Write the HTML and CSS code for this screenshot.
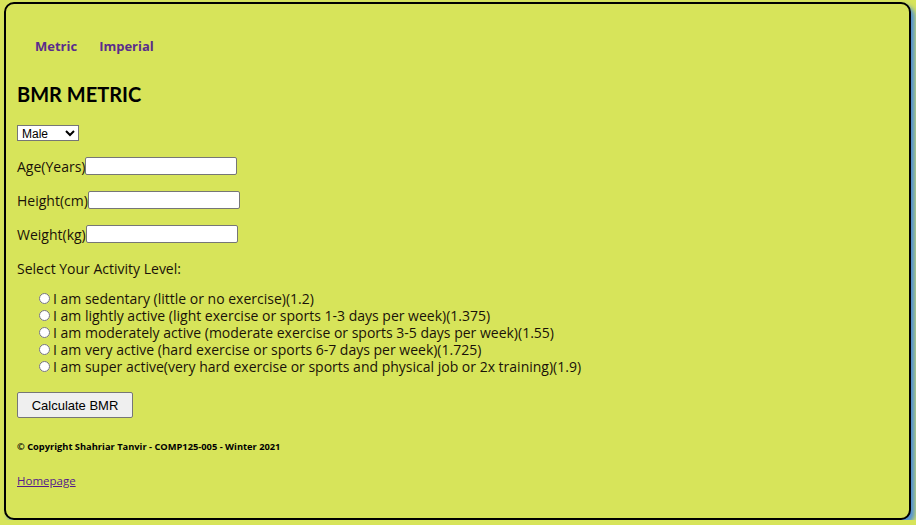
FILE: index.html
```html
<!DOCTYPE html>
<html lang="en">
<head>
<meta charset="utf-8">
<title>BMR Metric</title>
<link rel="stylesheet" href="styles.css">
</head>
<body>
<div class="card">
  <nav class="nav">
    <a href="#">Metric</a>
    <a href="#">Imperial</a>
  </nav>
  <h2 class="title">BMR METRIC</h2>
  <form class="form">
    <select class="sel">
      <option>Male</option>
      <option>Female</option>
    </select>
    <p class="row"><label>Age(Years)</label><input type="text" class="inp"></p>
    <p class="row"><label>Height(cm)</label><input type="text" class="inp"></p>
    <p class="row"><label>Weight(kg)</label><input type="text" class="inp"></p>
    <p class="row">Select Your Activity Level:</p>
    <ul class="levels">
      <li><input type="radio" name="a">I am sedentary (little or no exercise)(1.2)</li>
      <li><input type="radio" name="a">I am lightly active (light exercise or sports 1-3 days per week)(1.375)</li>
      <li><input type="radio" name="a">I am moderately active (moderate exercise or sports 3-5 days per week)(1.55)</li>
      <li><input type="radio" name="a">I am very active (hard exercise or sports 6-7 days per week)(1.725)</li>
      <li><input type="radio" name="a">I am super active(very hard exercise or sports and physical job or 2x training)(1.9)</li>
    </ul>
    <button type="button" class="btn">Calculate BMR</button>
  </form>
  <p class="copy">© Copyright Shahriar Tanvir - COMP125-005 - Winter 2021</p>
  <a class="home" href="#">Homepage</a>
</div>
</body>
</html>
```
FILE: styles.css
```css
html, body {
  margin: 0;
  background: #d7e45a;
}
body {
  padding: 2px 0 0 4px;
  font-family: "Open Sans", "DejaVu Sans", sans-serif;
  color: #1a1208;
}
.card {
  width: 907px;
  height: 518px;
  box-sizing: border-box;
  border: 2px solid #000;
  border-radius: 10px;
  background: #d7e45a;
  box-shadow: 4px 4px 5px #4f8fd8;
  padding: 0 0 0 11px;
}
.nav {
  display: flex;
  gap: 22px;
  padding: 33px 0 0 18px;
}
.nav a {
  font-size: 13px;
  font-weight: bold;
  color: #5a2d8c;
  text-decoration: none;
}
.title {
  margin: 26px 0 0;
  font-family: Lato, "Open Sans", sans-serif;
  font-size: 20px;
  line-height: 26px;
  font-weight: bold;
  color: #000;
}
.form {
  margin-top: 18px;
}
.sel {
  font-family: "Liberation Sans", Arial, sans-serif;
  font-size: 12px;
  width: 62px;
  height: 16px;
  padding: 0;
  border: 1px solid #767676;
  background: #fff;
  display: block;
}
.row {
  margin: 16px 0 0;
  font-size: 14px;
  display: flex;
  align-items: center;
  height: 18px;
}
.inp {
  width: 152px;
  height: 18px;
  box-sizing: border-box;
  border: 1px solid #767676;
  border-radius: 2px;
  margin: 0;
  padding: 0;
}
.levels {
  list-style: none;
  margin: 13px 0 0;
  padding: 0 0 0 21px;
  font-size: 14px;
  line-height: 17px;
}
.levels li {
  height: 17px;
  display: flex;
  align-items: center;
}
.levels input {
  width: 11px;
  height: 11px;
  margin: 0 3px 0 1px;
}
.btn {
  margin-top: 17px;
  width: 116px;
  height: 26px;
  font-family: "Liberation Sans", Arial, sans-serif;
  font-size: 13px;
  background: #efefef;
  border: 1px solid #767676;
  border-radius: 2px;
  color: #000;
}
.copy {
  margin: 22px 0 0;
  font-size: 9.3px;
  font-weight: bold;
  color: #000;
}
.home {
  display: inline-block;
  margin-top: 20px;
  font-size: 11.5px;
  color: #551a8b;
}
```
